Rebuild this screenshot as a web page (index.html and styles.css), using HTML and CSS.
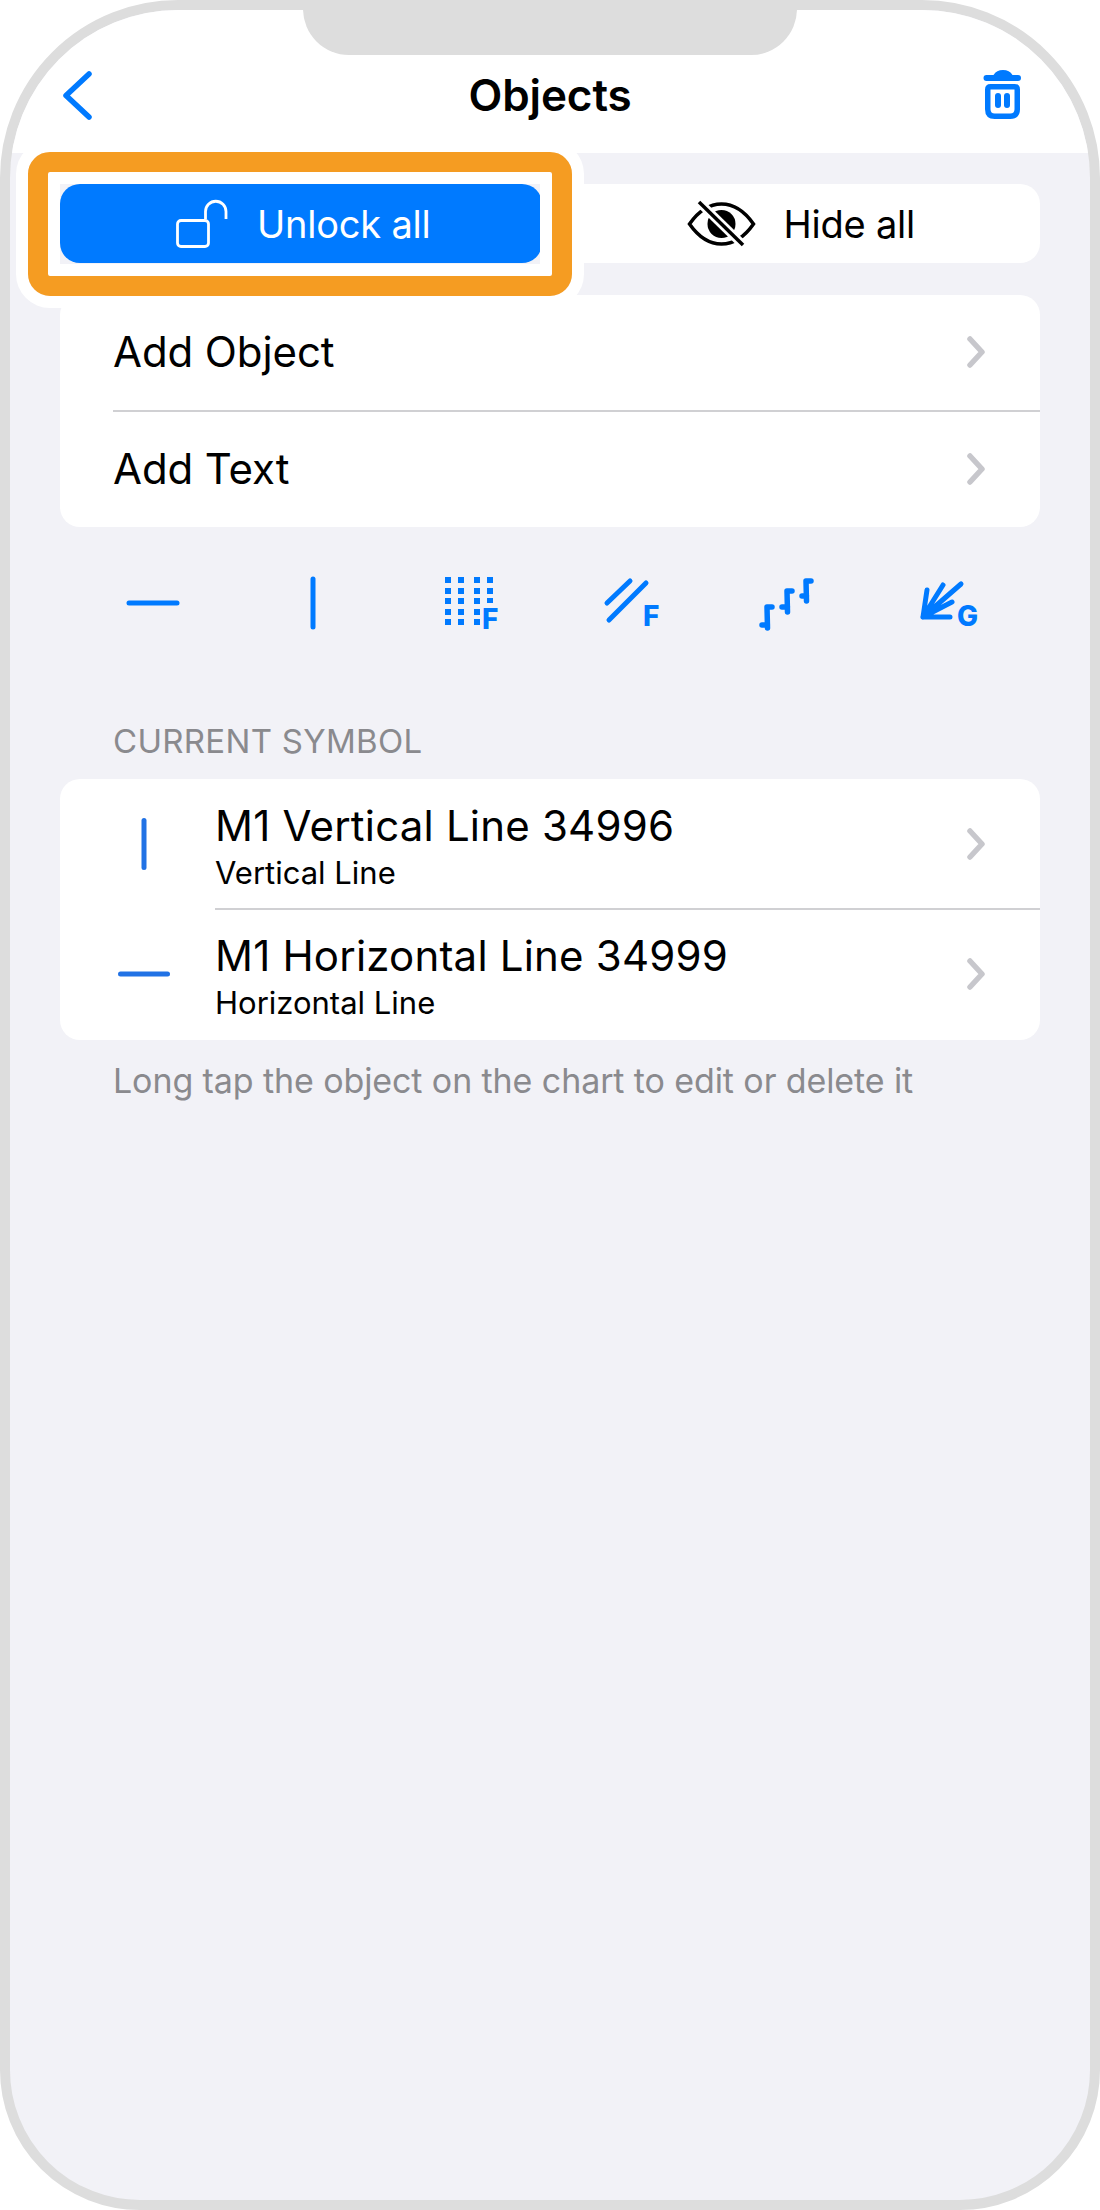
FILE: index.html
```html
<!DOCTYPE html>
<html lang="en">
<head>
<meta charset="utf-8">
<title>Objects</title>
<link rel="stylesheet" href="styles.css">
</head>
<body>
<div class="phone">
  <header class="nav">
    <svg class="back" viewBox="0 0 34 54"><path d="M28 3 5 24.500 28 46" /></svg>
    <h1 class="title">Objects</h1>
    <svg class="trash" viewBox="0 0 41 50">
      <path class="fill" d="M4.500 6h7q3-5 9.500-5t9.500 5h5.500a3 3 0 0 1 0 6H4.500a3 3 0 0 1 0-6z"/>
      <path class="line" d="M5.750 20.500q0-2.750 2.750-2.750h24q2.750 0 2.750 2.750v19.750q0 7-7 7h-15.500q-7 0-7-7z"/>
      <rect class="fill" x="13" y="24" width="6" height="15" rx="3"/>
      <rect class="fill" x="22" y="24" width="6" height="15" rx="3"/>
    </svg>
  </header>
  <div class="notch"></div>
  <main class="content">
    <div class="segments">
      <button class="seg seg-active">
        <svg class="lock" viewBox="0 0 56 52"><rect x="3.500" y="22.500" width="31" height="26" rx="3.500"/><path d="M31.500 21V13.500a10.250 10.250 0 0 1 20.500 0V21"/></svg>
        <span>Unlock all</span>
      </button>
      <button class="seg">
        <svg class="eye" viewBox="0 0 70 50">
          <path class="eye-o" d="M3.500 25C14 10 25 5 35.500 5S57 10 67.500 25C57 40 46 45 35.500 45S14 40 3.500 25Z"/>
          <circle cx="35.500" cy="25" r="14"/>
          <path class="eye-gap" d="M13 3 57 46"/>
          <path class="eye-slash" d="M13 3 57 46"/>
        </svg>
        <span>Hide all</span>
      </button>
    </div>

    <section class="group group-add">
      <div class="row row-first"><span class="row-label">Add Object</span><svg class="chev" viewBox="0 0 22 34"><path d="M3 4 15 17 3 30"/></svg></div>
      <div class="row row-sep"><span class="row-label">Add Text</span><svg class="chev" viewBox="0 0 22 34"><path d="M3 4 15 17 3 30"/></svg></div>
    </section>

    <div class="tools">
      <svg class="tool" viewBox="0 0 80 66"><path d="M16 29H64"/></svg>
      <svg class="tool" viewBox="0 0 80 66"><path d="M40 5V53"/></svg>
      <svg class="tool" viewBox="0 0 80 66">
        <g class="dots">
          <rect x="12" y="3" width="6" height="6"/><rect x="25" y="3" width="6" height="6"/><rect x="41" y="3" width="6" height="6"/><rect x="54" y="3" width="6" height="6"/>
          <rect x="12" y="14" width="6" height="6"/><rect x="25" y="14" width="6" height="6"/><rect x="41" y="14" width="6" height="6"/><rect x="54" y="14" width="6" height="6"/>
          <rect x="12" y="24" width="6" height="6"/><rect x="25" y="24" width="6" height="6"/><rect x="41" y="24" width="6" height="6"/><rect x="54" y="24" width="6" height="5"/>
          <rect x="12" y="35" width="6" height="6"/><rect x="25" y="35" width="6" height="6"/><rect x="41" y="35" width="6" height="6"/>
          <rect x="12" y="45" width="6" height="6"/><rect x="25" y="45" width="6" height="6"/><rect x="41" y="45" width="6" height="6"/>
        </g>
        <text class="tool-letter" x="49" y="55">F</text>
      </svg>
      <svg class="tool" viewBox="0 0 80 66"><path d="M14 29 37 7M16 46 53 9"/><text class="tool-letter" x="50" y="52">F</text></svg>
      <svg class="tool" viewBox="0 0 80 66"><path class="note-stem" d="M14.500 54 14 33H19M9 51H14.500M34.500 38 34 17H39M29 33H34.500M53.500 27 53 7H58M49 22H53.500"/></svg>
      <svg class="tool" viewBox="0 0 80 66"><path d="M10 43 48 10M10 43 30 11M10 43 14 16M10 43H37M10 43 39 28"/><text class="tool-letter" x="44" y="52">G</text></svg>
    </div>

    <h2 class="caption">CURRENT SYMBOL</h2>
    <section class="group group-objects">
      <div class="row row-object">
        <svg class="obj-icon" viewBox="0 0 60 60"><path d="M30 6.500V53.500"/></svg>
        <div class="obj-text"><div class="obj-title">M1 Vertical Line 34996</div><div class="obj-sub">Vertical Line</div></div>
        <svg class="chev" viewBox="0 0 22 34"><path d="M3 4 15 17 3 30"/></svg>
      </div>
      <div class="row row-object row-sep-obj">
        <svg class="obj-icon" viewBox="0 0 60 60"><path d="M6.500 30H53.500"/></svg>
        <div class="obj-text"><div class="obj-title">M1 Horizontal Line 34999</div><div class="obj-sub">Horizontal Line</div></div>
        <svg class="chev" viewBox="0 0 22 34"><path d="M3 4 15 17 3 30"/></svg>
      </div>
    </section>
    <p class="note">Long tap the object on the chart to edit or delete it</p>
  </main>
  <div class="highlight"></div>
</div>
</body>
</html>
```
FILE: styles.css
```css
* { box-sizing: border-box; }
html, body { margin: 0; padding: 0; }
body { width: 1100px; height: 2210px; background: #fff; font-family: Inter, "Liberation Sans", sans-serif; color: #000; }

.phone { position: relative; width: 1100px; height: 2210px; border: 10px solid #dddddd; border-radius: 178px 178px 140px 140px; background: #f2f2f7; overflow: hidden; display: flex; flex-direction: column; }
.notch { position: absolute; left: 293px; top: -10px; width: 494px; height: 55px; background: #dddddd; border-radius: 0 0 46px 46px; }

.nav { height: 143px; flex: none; background: #fff; display: flex; align-items: flex-start; position: relative; padding: 58px 67px 0 51px; justify-content: space-between; }
.back { width: 34px; height: 54px; margin-top: 3px; fill: none; stroke: #007aff; stroke-width: 5.500; stroke-linecap: round; stroke-linejoin: round; }
.title { position: absolute; left: 0; right: 0; top: 62px; margin: 0; text-align: center; font-size: 44px; line-height: 46px; font-weight: 600; letter-spacing: -0.1px; }
.trash { width: 41px; height: 50px; margin-top: 1px; }
.trash .fill { fill: #007aff; }
.trash .line { fill: none; stroke: #007aff; stroke-width: 5.500; }

.content { padding: 31px 50px 0; display: flex; flex-direction: column; }
.segments { display: flex; gap: 20px; height: 79px; }
.seg { flex: 1; border: 0; padding: 0; background: #fff; border-radius: 20px; display: flex; align-items: center; justify-content: center; gap: 27px; font: 400 38px/44px Inter, "Liberation Sans", sans-serif; letter-spacing: -0.2px; color: #000; }
.seg-active { background: #007aff; color: #fff; padding-left: 3px; }
.lock { width: 56px; height: 52px; fill: none; stroke: #fff; stroke-width: 2.800; }
.eye { width: 70px; height: 50px; }
.eye circle { fill: #000; }
.eye-o { fill: none; stroke: #000; stroke-width: 3.500; }
.eye-gap { stroke: #fff; stroke-width: 9; fill: none; }
.eye-slash { stroke: #000; stroke-width: 3.500; fill: none; }

.group { background: #fff; border-radius: 20px; }
.group-add { margin-top: 32px; }
.row { height: 117px; display: flex; align-items: center; justify-content: space-between; margin-left: 53px; padding: 0 51px 2px 0; position: relative; }
.row-first { height: 115px; }
.row-sep { border-top: 2px solid #d0d0d3; }
.row-label { font-size: 42px; line-height: 46px; letter-spacing: -0.1px; }
.chev { width: 22px; height: 34px; fill: none; stroke: #c7c7cc; stroke-width: 5.500; stroke-linecap: round; stroke-linejoin: round; flex: none; }

.tools { display: flex; margin: 47px 0 0 13px; height: 66px; }
.tool { width: 80px; height: 66px; margin: 0 40px; fill: none; stroke: #007aff; stroke-width: 5; stroke-linecap: round; stroke-linejoin: round; flex: none; }
.note-stem { stroke-width: 5.500; }
.dots { fill: #007aff; stroke: none; }
.tool-letter { font-family: Inter, "Liberation Sans", sans-serif; font-size: 28px; font-weight: 800; fill: #007aff; stroke: none; }

.caption { margin: 83px 0 0 53px; font-size: 33px; line-height: 36px; font-weight: 400; color: #8a8a8e; letter-spacing: 0.3px; }
.group-objects { margin-top: 20px; height: 261px; }
.row-object { height: 130px; margin-left: 0; justify-content: flex-start; padding-bottom: 0; }
.obj-icon { width: 60px; height: 60px; margin-left: 54px; margin-right: 41px; flex: none; fill: none; stroke: #2172e5; stroke-width: 5; stroke-linecap: round; }
.obj-text { flex: 1; padding-top: 4px; }
.row-sep-obj::before { content: ""; position: absolute; left: 155px; right: 0; top: -1px; height: 2px; background: #d0d0d3; }
.obj-title { font-size: 42px; line-height: 50px; letter-spacing: 0.2px; }
.obj-sub { font-size: 31px; line-height: 36px; margin-top: 4px; }
.note { margin: 21px 0 0 53px; font-size: 34px; line-height: 40px; color: #8a8a8e; letter-spacing: -0.1px; }

.highlight { position: absolute; left: 18px; top: 142px; width: 544px; height: 144px; border: 20px solid #f59c22; border-radius: 22px; box-shadow: inset 0 0 0 12px #fff, 0 0 0 12px #fff; }
```
